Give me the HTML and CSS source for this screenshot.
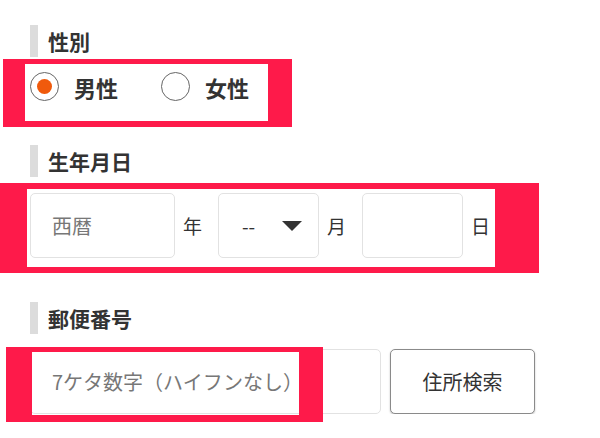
FILE: index.html
```html
<!DOCTYPE html>
<html lang="ja">

<head>
    <meta charset="UTF-8" />
    <meta name="viewport" content="width=device-width, initial-scale=1.0" />
    <title>入力フォーム</title>
    <link rel="stylesheet" href="styles.css">
</head>

<body>
    <form class="entry-form">
        <div class="field-label first">性別</div>
        <div class="radio-row">
            <label class="radio">
                <span class="radio-mark checked"></span>
                <span class="radio-text">男性</span>
            </label>
            <label class="radio">
                <span class="radio-mark"></span>
                <span class="radio-text">女性</span>
            </label>
        </div>

        <div class="field-label">生年月日</div>
        <div class="date-row">
            <div class="text-box year">西暦</div>
            <span class="unit">年</span>
            <div class="text-box select">
                <span>--</span>
                <span class="caret"></span>
            </div>
            <span class="unit">月</span>
            <div class="text-box day"></div>
            <span class="unit">日</span>
        </div>

        <div class="field-label">郵便番号</div>
        <div class="zip-row">
            <div class="text-box zip">7ケタ数字（ハイフンなし）</div>
            <button type="button" class="search-btn">住所検索</button>
        </div>
    </form>

    <!-- 注目枠 -->
    <div class="highlight hl-gender"></div>
    <div class="highlight hl-birth"></div>
    <div class="highlight hl-zip"></div>
</body>

</html>
```

FILE: styles.css
```css
body {
    font-family: "Noto Sans CJK JP", "Noto Sans", sans-serif;
    margin: 0;
    padding: 0;
    background: #fff;
    color: #333;
}

.entry-form {
    padding-left: 30px;
}

.field-label {
    height: 32px;
    line-height: 32px;
    margin-top: 44px;
    padding-left: 10px;
    border-left: 8px solid #dcdcdc;
    font-size: 21px;
    font-weight: bold;
}

.field-label.first {
    margin-top: 25px;
}

/* 性別 */
.radio-row {
    display: flex;
    align-items: center;
    gap: 43px;
    margin-top: 15px;
    height: 29px;
}

.radio {
    display: flex;
    align-items: center;
    gap: 15px;
}

.radio-mark {
    width: 27px;
    height: 27px;
    border: 1px solid #666;
    border-radius: 50%;
    display: flex;
    align-items: center;
    justify-content: center;
}

.radio-mark.checked::after {
    content: "";
    width: 15px;
    height: 15px;
    border-radius: 50%;
    background: #f05a0c;
}

.radio-text {
    font-size: 22px;
    font-weight: bold;
}

/* 入力欄 */
.date-row,
.zip-row {
    display: flex;
    align-items: center;
    margin-top: 16px;
}

.zip-row {
    margin-top: 15px;
    gap: 9px;
}

.text-box {
    box-sizing: border-box;
    height: 65px;
    border: 1px solid #e2e2e2;
    border-radius: 5px;
    display: flex;
    align-items: center;
    padding-left: 21px;
    font-size: 20px;
    color: #777;
    white-space: nowrap;
}

.text-box.year {
    width: 145px;
}

.text-box.select {
    width: 101px;
    padding: 0 16px 0 23px;
    justify-content: space-between;
    font-size: 19px;
    color: #333;
}

.caret {
    width: 0;
    height: 0;
    border-left: 10px solid transparent;
    border-right: 10px solid transparent;
    border-top: 10px solid #333;
}

.text-box.day {
    width: 101px;
}

.text-box.zip {
    width: 351px;
    overflow: hidden;
}

.unit {
    font-size: 19px;
    margin: 0 16px 0 8px;
}

.unit:last-child {
    margin-right: 0;
}

.search-btn {
    box-sizing: border-box;
    width: 145px;
    height: 65px;
    background: #fff;
    border: 1px solid #8a8a8a;
    border-radius: 5px;
    box-shadow: 0 1px 2px rgba(0, 0, 0, 0.25);
    font-family: inherit;
    font-size: 20px;
    color: #333;
}

/* 赤い注目枠 */
.highlight {
    position: absolute;
    box-sizing: border-box;
    border-style: solid;
    border-color: #fe1a4a;
}

.hl-gender {
    left: 3px;
    top: 59px;
    width: 289px;
    height: 68px;
    border-width: 5px 24px 6px 22px;
}

.hl-birth {
    left: 0;
    top: 183px;
    width: 539px;
    height: 90px;
    border-width: 6px 44px 6px 27px;
}

.hl-zip {
    left: 6px;
    top: 347px;
    width: 317px;
    height: 75px;
    border-width: 5px 24px 7px 26px;
}
```
